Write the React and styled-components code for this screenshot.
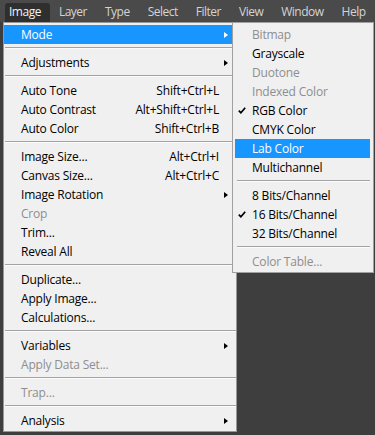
import React from 'react';
import styled, { createGlobalStyle } from 'styled-components';

const Global = createGlobalStyle`
  html, body { margin: 0; padding: 0; background: #3e3e3e; }
  body { font-family: "Open Sans", "Noto Sans", sans-serif; font-size: 12px; }
`;

const Screen = styled.div`
  width: 375px;
  height: 435px;
  background: #3e3e3e;
  overflow: hidden;
  display: flex;
  flex-direction: column;
`;

const MenuBar = styled.div`
  height: 22px;
  flex-shrink: 0;
  background: #4a4a4a;
  display: flex;
  align-items: stretch;
`;

const BarItem = styled.div`
  display: flex;
  align-items: center;
  padding: 0 9px;
  color: #d4d4d4;
  letter-spacing: -0.5px;
  white-space: nowrap;
`;

const OpenBarItem = styled(BarItem)`
  margin: 3px 0 0 5px;
  padding: 0 9px 3px 4px;
  background: #2f2f2f;
  border-radius: 3px 3px 0 0;
  color: #f2f2f2;
`;

const Workspace = styled.div`
  position: relative;
  flex: 1;
`;

const Dropdown = styled.div`
  position: absolute;
  top: 0;
  left: 3px;
  width: 234px;
  box-sizing: border-box;
  background: #f0f0f0;
  border: 1px solid #979797;
  padding: 2px 0 1px 0;
  display: flex;
  flex-direction: column;
`;

const Row = styled.div`
  position: relative;
  height: 19px;
  display: grid;
  grid-template-columns: 17px 1fr auto 17px;
  align-items: center;
  background: ${p => (p.$active ? '#1796ff' : 'transparent')};
  color: ${p => (p.$active ? '#ffffff' : p.$disabled ? '#8e8e8e' : '#000000')};
  letter-spacing: -0.2px;
  white-space: nowrap;
`;

const Label = styled.span`
  grid-column: 2;
`;

const Shortcut = styled.span`
  grid-column: 3;
  text-align: right;
`;

const ArrowCell = styled.span`
  grid-column: 4;
  display: flex;
  padding-left: 5px;
`;

const Arrow = styled.span`
  width: 0;
  height: 0;
  border-left: 4px solid ${p => (p.$light ? '#ffffff' : '#000000')};
  border-top: 3.5px solid transparent;
  border-bottom: 3.5px solid transparent;
`;

const Separator = styled.div`
  height: 9px;
  display: flex;
  align-items: flex-start;
  padding: 3px 0 0 1px;
  box-sizing: border-box;
  &::before {
    content: '';
    flex: 1;
    border-top: 1px solid #a3a3a3;
    border-bottom: 1px solid #fbfbfb;
    box-sizing: border-box;
    height: 2px;
  }
`;

const SubMenu = styled.div`
  position: absolute;
  top: -3px;
  left: calc(100% - 4px);
  width: 142px;
  box-sizing: border-box;
  background: #f0f0f0;
  border: 1px solid #a0a0a0;
  padding: 2px 3px 1px 2px;
  display: flex;
  flex-direction: column;
  z-index: 2;
`;

const SubRow = styled.div`
  height: 19px;
  display: grid;
  grid-template-columns: 17px 1fr;
  align-items: center;
  background: ${p => (p.$active ? '#1796ff' : 'transparent')};
  color: ${p => (p.$active ? '#ffffff' : p.$disabled ? '#8e8e8e' : '#000000')};
  letter-spacing: -0.2px;
  white-space: nowrap;
`;

const CheckCell = styled.span`
  display: flex;
  padding-left: 3px;
`;

const SubSeparator = styled(Separator)`
  padding: 3px 0 0 2px;
`;

const Check = () => (
  <svg width="8" height="7" viewBox="0 0 8 7">
    <path d="M0.8 3.6 L2.9 5.8 L7.2 0.8" fill="none" stroke="#000" strokeWidth="1.7" />
  </svg>
);

const barItems = ['Layer', 'Type', 'Select', 'Filter', 'View', 'Window', 'Help'];

const mainItems = [
  { label: 'Mode', sub: true, active: true },
  'sep',
  { label: 'Adjustments', sub: true },
  'sep',
  { label: 'Auto Tone', key: 'Shift+Ctrl+L' },
  { label: 'Auto Contrast', key: 'Alt+Shift+Ctrl+L' },
  { label: 'Auto Color', key: 'Shift+Ctrl+B' },
  'sep',
  { label: 'Image Size...', key: 'Alt+Ctrl+I' },
  { label: 'Canvas Size...', key: 'Alt+Ctrl+C' },
  { label: 'Image Rotation', sub: true },
  { label: 'Crop', disabled: true },
  { label: 'Trim...' },
  { label: 'Reveal All' },
  'sep',
  { label: 'Duplicate...' },
  { label: 'Apply Image...' },
  { label: 'Calculations...' },
  'sep',
  { label: 'Variables', sub: true },
  { label: 'Apply Data Set...', disabled: true },
  'sep',
  { label: 'Trap...', disabled: true },
  'sep',
  { label: 'Analysis', sub: true },
];

const modeItems = [
  { label: 'Bitmap', disabled: true },
  { label: 'Grayscale' },
  { label: 'Duotone', disabled: true },
  { label: 'Indexed Color', disabled: true },
  { label: 'RGB Color', checked: true },
  { label: 'CMYK Color' },
  { label: 'Lab Color', active: true },
  { label: 'Multichannel' },
  'sep',
  { label: '8 Bits/Channel' },
  { label: '16 Bits/Channel', checked: true },
  { label: '32 Bits/Channel' },
  'sep',
  { label: 'Color Table...', disabled: true },
];

function ModeSubMenu() {
  return (
    <SubMenu>
      {modeItems.map((it, i) =>
        it === 'sep' ? (
          <SubSeparator key={i} />
        ) : (
          <SubRow key={i} $active={it.active} $disabled={it.disabled}>
            <CheckCell>{it.checked && <Check />}</CheckCell>
            <span>{it.label}</span>
          </SubRow>
        )
      )}
    </SubMenu>
  );
}

export default function App() {
  return (
    <Screen>
      <Global />
      <MenuBar>
        <OpenBarItem>Image</OpenBarItem>
        {barItems.map(b => (
          <BarItem key={b}>{b}</BarItem>
        ))}
      </MenuBar>
      <Workspace>
        <Dropdown>
          {mainItems.map((it, i) =>
            it === 'sep' ? (
              <Separator key={i} />
            ) : (
              <Row key={i} $active={it.active} $disabled={it.disabled}>
                <Label>{it.label}</Label>
                <Shortcut>{it.key || ''}</Shortcut>
                <ArrowCell>{it.sub && <Arrow $light={it.active} />}</ArrowCell>
                {it.label === 'Mode' && <ModeSubMenu />}
              </Row>
            )
          )}
        </Dropdown>
      </Workspace>
    </Screen>
  );
}
